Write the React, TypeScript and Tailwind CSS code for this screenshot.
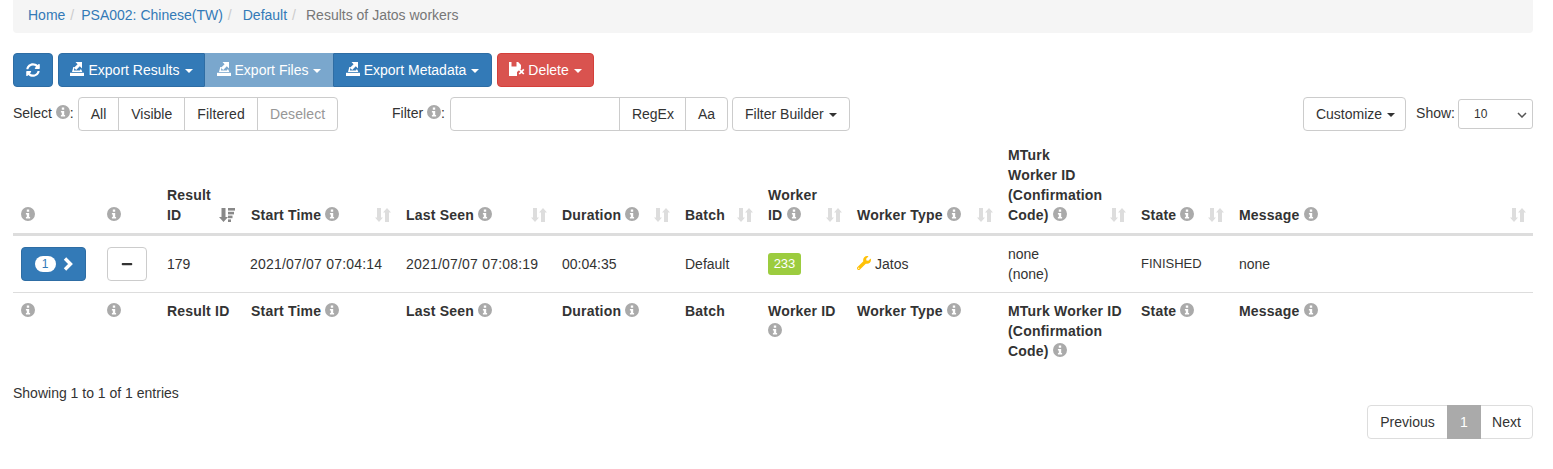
import type { ReactNode } from "react";
import { FaMinus, FaSyncAlt, FaWrench } from "react-icons/fa";

const btnBlue = "bg-[#337ab7] border border-[#2e6da4] text-white";

function Caret() {
  return <span className="inline-block ml-[5px] align-middle w-0 h-0 border-x-[4px] border-x-transparent border-t-[4px] border-t-current" />;
}

// glyphicon-info-sign look-alike
function Info() {
  return (
    <svg viewBox="0 0 14 14" className="inline-block w-[14px] h-[14px] align-[-1px] text-[#aaaaaa]" fill="currentColor" fillRule="evenodd">
      <path d="M7 0a7 7 0 1 1 0 14A7 7 0 0 1 7 0zM5.8 2.6v2.2h2.4V2.6zM4.9 6v1.5h.9v2.6h-.9v1.4h4.2v-1.4h-.9V6z" />
    </svg>
  );
}

// glyphicon-export look-alike
function ExportIcon() {
  return (
    <svg viewBox="0 0 14 14" className="inline-block w-[14px] h-[14px] mr-[4px] align-[-1px]" fill="currentColor">
      <path d="M5.5 0H12v6.5L9.8 4.3 6.2 8 4 5.8l3.6-3.6z" />
      <path d="M2 10l1.3-5h1.4L3.9 8.6h6.3L9.8 7.4h1.5l1 2.6z" />
      <rect x="0" y="10.8" width="14" height="3.2" />
    </svg>
  );
}

// glyphicon-floppy-remove look-alike
function FloppyRemove() {
  return (
    <svg viewBox="0 0 16 14" className="inline-block w-[16px] h-[14px] mr-[3px] align-[-1px]" fill="currentColor">
      <path d="M0 0h2.5v4.5h5V0h1.6L12 3v3.5L8 10v4H0z" />
      <path d="M9.6 8l1.2-1.2 1.7 1.7 1.7-1.7L15.4 8l-1.7 1.7 1.7 1.7-1.2 1.2-1.7-1.7-1.7 1.7-1.2-1.2 1.7-1.7z" />
    </svg>
  );
}

function SortIcon({ active = false }: { active?: boolean }) {
  if (active) {
    return (
      <svg viewBox="0 0 16 14" className="absolute right-[8px] bottom-[11px] w-[16px] h-[14px] text-[#888888]" fill="currentColor">
        <path d="M2.5 0h4v9H9l-4.5 5L0 9h2.5z" />
        <rect x="9" y="0" width="7" height="2.6" />
        <rect x="9" y="3.8" width="6" height="2.6" />
        <rect x="9" y="7.6" width="4.5" height="2.6" />
        <rect x="9" y="11.4" width="3" height="2.6" />
      </svg>
    );
  }
  return (
    <svg viewBox="0 0 16 14" className="absolute right-[7px] bottom-[11px] w-[16px] h-[14px] text-[#dddddd]" fill="currentColor">
      <path d="M2 0h4v9.5h2L4 14 0 9.5h2z" />
      <path d="M12 0l4 4.5h-2V14h-4V4.5H8z" />
    </svg>
  );
}

function Th({ children, sort, active }: { children: ReactNode; sort?: boolean; active?: boolean }) {
  return (
    <th className="relative p-2 pr-[30px] align-bottom text-left font-bold leading-5 tracking-[0.2px] border-b-[3px] border-[#dddddd]">
      {children}
      {sort && <SortIcon active={active} />}
    </th>
  );
}

function Tf({ children }: { children: ReactNode }) {
  return <th className="p-2 align-top text-left font-bold leading-5 tracking-[0.2px]">{children}</th>;
}

function Crumb({ children, sep }: { children: ReactNode; sep: string }) {
  return (
    <li>
      <span className="text-[#337ab7]">{children}</span>
      <span className={`text-[#cccccc] pl-[5px] ${sep}`}>/</span>
    </li>
  );
}

export default function App() {
  return (
    <div className="min-h-screen bg-white text-[14px] leading-5 text-[#333333] font-['Liberation_Sans',Arial,sans-serif] pl-[13px] pr-[20px]">
      {/* breadcrumb */}
      <ol className="flex items-center h-[33px] pl-[15px] mb-5 bg-[#f5f5f5] rounded-b pb-[3px] text-[#777777]">
        <Crumb sep="pr-[7px]">Home</Crumb>
        <Crumb sep="pr-[11px]">PSA002: Chinese(TW)</Crumb>
        <Crumb sep="pr-[10px]">Default</Crumb>
        <li>Results of Jatos workers</li>
      </ol>

      {/* toolbar */}
      <div className="flex items-start h-[34px]">
        <button className={`${btnBlue} w-[40px] h-[34px] rounded flex items-center justify-center`}>
          <FaSyncAlt className="w-[14px] h-[14px]" />
        </button>
        <div className="flex ml-[5px]">
          <button className={`${btnBlue} h-[34px] w-[147px] rounded-l`}><ExportIcon />Export Results<Caret /></button>
          <button className="h-[34px] w-[128px] bg-[#7aa7cd] text-white"><ExportIcon />Export Files<Caret /></button>
          <button className={`${btnBlue} h-[34px] w-[159px] rounded-r`}><ExportIcon />Export Metadata<Caret /></button>
        </div>
        <button className="ml-[5px] h-[34px] w-[97px] rounded bg-[#d9534f] border border-[#d43f3a] text-white"><FloppyRemove />Delete<Caret /></button>
      </div>

      {/* filters */}
      <div className="flex items-start mt-[10px] h-[35px]">
        <div className="flex items-start w-[379px]">
          <span className="mt-[6px] mr-[4px]">Select <Info />:</span>
          <div className="flex h-[34px] border border-[#cccccc] rounded">
            <span className="px-3 flex items-center border-r border-[#cccccc]">All</span>
            <span className="px-3 flex items-center border-r border-[#cccccc]">Visible</span>
            <span className="px-3 flex items-center border-r border-[#cccccc] tracking-[0.12px]">Filtered</span>
            <span className="px-3 flex items-center text-[#8c8c8c] opacity-90 tracking-[0.12px]">Deselect</span>
          </div>
        </div>
        <span className="mt-[6px] mr-[5px]">Filter <Info />:</span>
        <div className="flex h-[34px] border border-[#cccccc] rounded">
          <input className="w-[169px] border-r border-[#cccccc] outline-none" />
          <span className="pl-3 pr-[11px] flex items-center border-r border-[#cccccc]">RegEx</span>
          <span className="px-3 flex items-center">Aa</span>
        </div>
        <button className="ml-[4px] h-[34px] px-3 border border-[#cccccc] rounded">Filter Builder<Caret /></button>
        <div className="ml-auto flex items-start">
          <button className="h-[34px] pl-[12px] pr-[10px] border border-[#cccccc] rounded">Customize<Caret /></button>
          <span className="ml-[10px] mr-[3px] mt-[6px]">Show:</span>
          <div className="relative mt-[2px] w-[75px] h-[30px] border border-[#cccccc] rounded-[3px] text-[12px] flex items-center pl-[15px]">
            10
            <svg viewBox="0 0 10 6" className="absolute right-[5px] top-[12px] w-[10px] h-[6px] text-[#555555]" fill="none" stroke="currentColor" strokeWidth="1.5">
              <path d="M1 1l4 4 4-4" />
            </svg>
          </div>
        </div>
      </div>

      {/* table */}
      <table className="table-fixed w-[1520px] mt-[5px] border-collapse">
        <colgroup>
          <col className="w-[86px]" />
          <col className="w-[60px]" />
          <col className="w-[84px]" />
          <col className="w-[155px]" />
          <col className="w-[156px]" />
          <col className="w-[123px]" />
          <col className="w-[83px]" />
          <col className="w-[89px]" />
          <col className="w-[151px]" />
          <col className="w-[133px]" />
          <col className="w-[98px]" />
          <col />
        </colgroup>
        <thead>
          <tr>
            <Th><Info /></Th>
            <Th><Info /></Th>
            <Th sort active>Result ID</Th>
            <Th sort>Start Time <Info /></Th>
            <Th sort>Last Seen <Info /></Th>
            <Th sort>Duration <Info /></Th>
            <Th sort>Batch</Th>
            <Th sort>Worker ID <Info /></Th>
            <Th sort>Worker Type <Info /></Th>
            <Th sort>MTurk Worker ID (Confirmation Code) <Info /></Th>
            <Th sort>State <Info /></Th>
            <Th sort>Message <Info /></Th>
          </tr>
        </thead>
        <tbody>
          <tr className="border-b border-[#dddddd]">
            <td className="p-2 align-middle h-[56px]">
              <button className={`${btnBlue} w-[65px] h-[34px] rounded flex items-center justify-center gap-[7px]`}>
                <span className="bg-white text-[#337ab7] rounded-[10px] w-[21px] h-[16px] text-[12px] leading-[16px] text-center">1</span>
                <svg viewBox="0 0 10 14" className="w-[10px] h-[14px]" fill="none" stroke="currentColor" strokeWidth="3.4">
                  <path d="M2 1.5L7.5 7 2 12.5" />
                </svg>
              </button>
            </td>
            <td className="p-2 align-middle">
              <button className="w-[40px] h-[34px] rounded border border-[#cccccc] flex items-center justify-center">
                <FaMinus className="w-[12px] h-[12px]" />
              </button>
            </td>
            <td className="p-2">179</td>
            <td className="p-2 pl-[7px] tracking-[0.2px]">2021/07/07 07:04:14</td>
            <td className="p-2 tracking-[0.2px]">2021/07/07 07:08:19</td>
            <td className="p-2">00:04:35</td>
            <td className="p-2">Default</td>
            <td className="p-2">
              <span className="inline-block bg-[#9ccc3f] text-white rounded-[3px] w-[33px] h-[22px] leading-[21px] text-center text-[13px]">233</span>
            </td>
            <td className="p-2"><FaWrench className="inline-block w-[14px] h-[14px] text-[#ffc107] mr-[4px] align-[-1px]" />Jatos</td>
            <td className="p-2">none<br />(none)</td>
            <td className="p-2 text-[13px]">FINISHED</td>
            <td className="p-2">none</td>
          </tr>
        </tbody>
        <tfoot>
          <tr>
            <Tf><Info /></Tf>
            <Tf><Info /></Tf>
            <Tf>Result ID</Tf>
            <Tf>Start Time <Info /></Tf>
            <Tf>Last Seen <Info /></Tf>
            <Tf>Duration <Info /></Tf>
            <Tf>Batch</Tf>
            <Tf>Worker ID <Info /></Tf>
            <Tf>Worker Type <Info /></Tf>
            <Tf>MTurk Worker ID (Confirmation Code) <Info /></Tf>
            <Tf>State <Info /></Tf>
            <Tf>Message <Info /></Tf>
          </tr>
        </tfoot>
      </table>

      {/* table info + pager */}
      <div className="mt-[14px]">Showing 1 to 1 of 1 entries</div>
      <div className="flex justify-end mt-[2px]">
        <div className="flex h-[34px] border border-[#dddddd] rounded">
          <span className="w-[79px] flex items-center justify-center">Previous</span>
          <span className="w-[34px] flex items-center justify-center bg-[#aaaaaa] text-white -my-px">1</span>
          <span className="w-[51px] flex items-center justify-center">Next</span>
        </div>
      </div>
    </div>
  );
}
